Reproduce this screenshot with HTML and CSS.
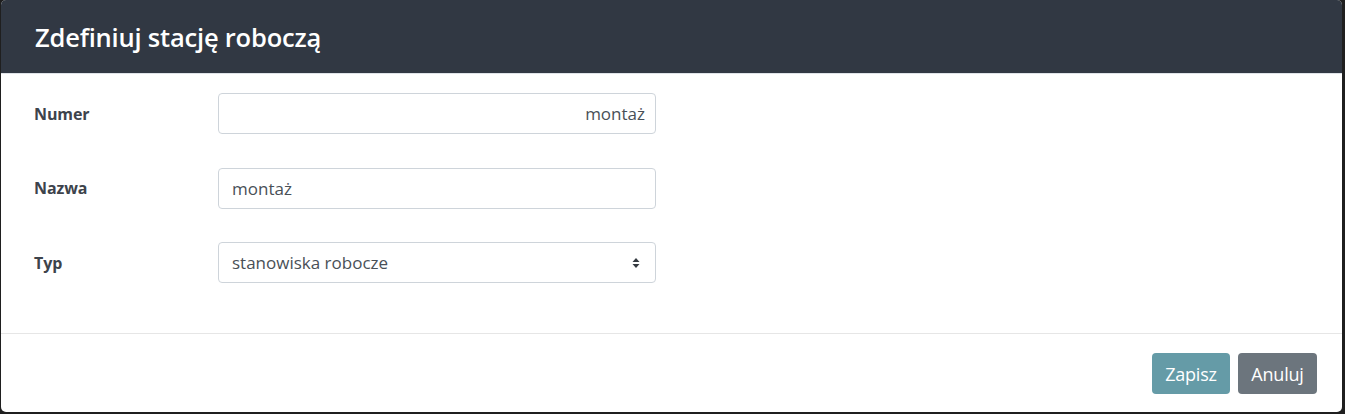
FILE: index.html
```html
<!DOCTYPE html>
<html lang="pl">
<head>
<meta charset="utf-8">
<title>Zdefiniuj stację roboczą</title>
<link rel="stylesheet" href="styles.css">
</head>
<body>
<div class="modal">
  <div class="modal-header">
    <h1 class="modal-title">Zdefiniuj stację roboczą</h1>
  </div>
  <div class="modal-body">
    <div class="form-row">
      <label class="form-label">Numer</label>
      <div class="form-control align-right">montaż</div>
    </div>
    <div class="form-row">
      <label class="form-label">Nazwa</label>
      <div class="form-control">montaż</div>
    </div>
    <div class="form-row">
      <label class="form-label">Typ</label>
      <div class="form-control form-select">
        <span>stanowiska robocze</span>
        <svg class="select-arrows" width="8" height="12" viewBox="0 0 8 12"><path d="M4 1 L7.5 5 L0.5 5 Z M0.5 7 L7.5 7 L4 11 Z" fill="#343a40"/></svg>
      </div>
    </div>
  </div>
  <div class="modal-footer">
    <button class="btn btn-save">Zapisz</button>
    <button class="btn btn-cancel">Anuluj</button>
  </div>
</div>
</body>
</html>
```
FILE: styles.css
```css
html, body {
  margin: 0;
  padding: 0;
  background: #1f1f1f;
}
body {
  width: 1345px;
  height: 414px;
  overflow: hidden;
  font-family: "Open Sans", "Noto Sans", sans-serif;
}
.modal {
  margin: 0 3px 0 1px;
  height: 412px;
  background: #fff;
  border-radius: 5px;
  overflow: hidden;
  display: flex;
  flex-direction: column;
}
.modal-header {
  height: 74px;
  background: #313843;
  border-bottom: 1px solid #dfe3e8;
  display: flex;
  align-items: center;
  padding-left: 34px;
  box-sizing: border-box;
}
.modal-title {
  margin: 0;
  color: #fff;
  font-size: 25.5px;
  font-weight: 600;
  letter-spacing: -0.2px;
}
.modal-body {
  padding: 19px 0 0 33px;
  height: 260px;
  box-sizing: border-box;
  border-bottom: 1px solid #e6e6e6;
  display: flex;
  flex-direction: column;
  gap: 33.5px;
}
.form-row {
  display: flex;
  align-items: center;
}
.form-label {
  width: 184px;
  font-weight: 700;
  font-size: 16px;
  color: #3d434b;
  letter-spacing: -0.1px;
}
.form-control {
  width: 438px;
  height: 41px;
  box-sizing: border-box;
  border: 1px solid #ced4da;
  border-radius: 4px;
  padding: 0 12px 0 13px;
  display: flex;
  align-items: center;
  font-size: 17px;
  color: #495057;
  letter-spacing: 0;
}
.align-right {
  justify-content: flex-end;
  padding-right: 10px;
}
.form-select {
  justify-content: space-between;
  padding-right: 15px;
}
.select-arrows {
  display: block;
}
.modal-footer {
  flex: 1;
  display: flex;
  justify-content: flex-end;
  align-items: flex-start;
  padding: 19px 25px 0 0;
  gap: 8px;
}
.btn {
  height: 41px;
  border: none;
  border-radius: 4px;
  color: #fff;
  font-family: inherit;
  font-size: 18px;
  padding: 0;
  letter-spacing: -0.2px;
}
.btn-save {
  width: 78px;
  background: #659ba7;
}
.btn-cancel {
  width: 79px;
  background: #6c757d;
}
```
